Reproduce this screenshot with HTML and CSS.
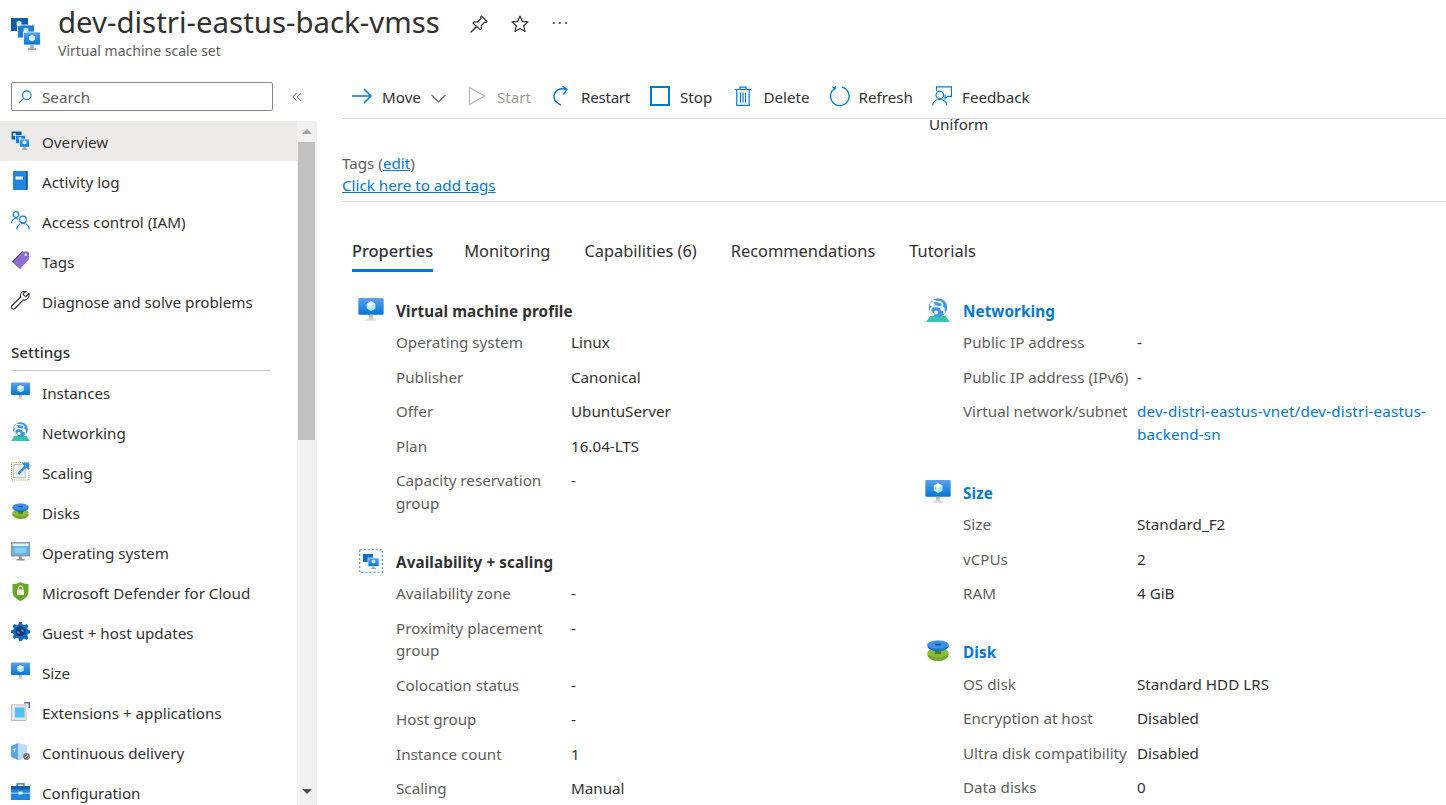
FILE: index.html
```html
<!DOCTYPE html>
<html lang="en">
<head>
<meta charset="utf-8">
<title>dev-distri-eastus-back-vmss</title>
<link rel="stylesheet" href="styles.css">
</head>
<body>
<svg class="defs" xmlns="http://www.w3.org/2000/svg">
	<defs>
		<linearGradient id="screen" x1="0" y1="0" x2="0" y2="1"><stop offset="0" stop-color="#5ea0ef"/><stop offset="1" stop-color="#0078d4"/></linearGradient>
		<linearGradient id="stand" x1="0" y1="0" x2="0" y2="1"><stop offset="0" stop-color="#b3b3b3"/><stop offset="1" stop-color="#e0e0e0"/></linearGradient>
		<symbol id="i-vm" viewBox="0 0 19 18">
			<rect x="0" y="0" width="19" height="12.5" rx=".7" fill="url(#screen)"/>
			<path d="M8 12.500h3l.4 3.400h2v1.200H5.600v-1.200h2z" fill="url(#stand)"/>
			<path d="M9.500 2.500l3.200 1.800v3.600L9.500 9.800 6.300 7.900V4.300z" fill="#c3f1ff"/>
			<path d="M9.500 6l3.200-1.700v3.600L9.500 9.800z" fill="#9cebff"/>
			<path d="M9.500 2.500l3.200 1.800L9.500 6 6.300 4.300z" fill="#fff"/>
		</symbol>
		<symbol id="i-vmss" viewBox="0 0 30 34">
			<rect x="0" y="1" width="17" height="13" fill="#0a5ea8"/>
			<rect x="6.500" y="8" width="17" height="13" fill="#1b7fd6"/>
			<rect x="6.500" y="8" width="17" height="13" fill="none" stroke="#fff" stroke-width=".8"/>
			<rect x="12.500" y="15" width="17" height="13" fill="url(#screen)"/>
			<rect x="12.500" y="15" width="17" height="13" fill="none" stroke="#fff" stroke-width=".8"/>
			<path d="M19.500 28h3l.4 3.200h2.300V33h-8.400v-1.800h2.300z" fill="#a8a8a8"/>
			<path d="M8 3.500l2.400 1.300V8L8 9.500 5.600 8V4.800z" fill="#cfeeff"/>
			<path d="M15 10.500l2.400 1.300v3.200L15 16.500 12.600 15v-3.200z" fill="#cfeeff"/>
			<path d="M21 17.500l3 1.700v3.500l-3 1.800-3-1.800v-3.500z" fill="#d8f3ff"/>
		</symbol>
		<symbol id="i-mini-vmss" viewBox="0 0 19 19">
			<rect x="0.500" y="0.500" width="10" height="8" fill="#0a5ea8"/>
			<rect x="4.500" y="4.500" width="10" height="8" fill="#1b7fd6" stroke="#fff" stroke-width=".6"/>
			<rect x="8.500" y="8" width="10" height="8" fill="url(#screen)" stroke="#fff" stroke-width=".6"/>
			<path d="M12.500 16h2l.3 1.600h1.200V19h-5v-1.400h1.200z" fill="#a8a8a8"/>
			<path d="M3.500 2l1.400.8v1.600l-1.400.8-1.400-.8V2.800zM13.500 9.500l1.800 1v2l-1.800 1-1.800-1v-2z" fill="#d8f3ff"/>
			<path d="M9 6l1.400.8v1.400H7.600V6.800z" fill="#cfeeff"/>
		</symbol>
		<symbol id="i-book" viewBox="0 0 19 19">
			<path d="M3 0h12.500a1 1 0 0 1 1 1v17a1 1 0 0 1-1 1H3a1 1 0 0 1-1-1V1a1 1 0 0 1 1-1z" fill="#1f86dc"/>
			<path d="M15 0h.7a1 1 0 0 1 1 1v17a1 1 0 0 1-1 1H15z" fill="#0f5a9e"/>
			<rect x="4.500" y="5.500" width="7.500" height="3" fill="#f2f6fa"/>
		</symbol>
		<symbol id="i-iam" viewBox="0 0 19 19" fill="none" stroke="#1b82d8" stroke-width="1.200">
			<circle cx="5" cy="3.500" r="2.800"/>
			<path d="M.6 12.500C.8 9.200 2.700 7.500 5 7.500c.8 0 1.500.2 2.100.5"/>
			<circle cx="12" cy="8.500" r="3.300"/>
			<path d="M5.800 18.500c.2-3.900 2.900-6 6.200-6s6 2.100 6.200 6"/>
		</symbol>
		<symbol id="i-tag" viewBox="0 0 18 19">
			<path d="M10.500 .5h6l1 1v6.500l-8.800 10L.4 10.500z" fill="#8f6fd0"/>
			<path d="M.4 10.500L10.500 .5h1.300L2 11l7 7-.3 0z" fill="#6f4bb2"/>
			<circle cx="14.300" cy="3.800" r="1.300" fill="#ece4fa"/>
		</symbol>
		<symbol id="i-wrench" viewBox="0 0 19 19" fill="none" stroke="#323130" stroke-width="1.100" stroke-linejoin="round">
			<path d="M18 2.500l-3 3-2-1-.8-2 3-2C12.600-.2 9.800 1 9.500 4c-.1.800.1 1.400.3 2L1 14.500c-.8.900-.8 2.200 0 3 .9.800 2.100.8 3 0l8.400-8.600c3.300 1 6.400-2.600 5.600-6.400z"/>
		</symbol>
		<symbol id="i-net" viewBox="0 0 19 19">
			<path d="M3.500 14h12l3.500 5H0z" fill="#37c2b1"/>
			<circle cx="9.500" cy="7.500" r="7.300" fill="#3d96e0"/>
			<path d="M4.500 1.800c2 1.200 5.500.4 7.500 1.700 2 1.500 1 3.500-1 3.500S6.500 5.500 4.500 7.500 4 11.500 6.500 13.500M13 9c1.500.5 2 2 1 3.500" fill="none" stroke="#eaf5ff" stroke-width="1.400"/>
			<circle cx="5" cy="5" r="1.800" fill="#fff"/>
			<circle cx="13" cy="8.500" r="1.800" fill="#fff"/>
			<circle cx="8" cy="11.500" r="1.600" fill="#fff"/>
		</symbol>
		<symbol id="i-scale" viewBox="0 0 18 18">
			<rect x=".5" y=".5" width="16.500" height="16.500" fill="none" stroke="#86b83c" stroke-width="1" stroke-dasharray="1 1"/>
			<rect x="2.500" y="2.500" width="11" height="12.500" fill="#f1f1f1" stroke="#bdbdbd"/>
			<path d="M6.800 11.200L14.500 3.500" stroke="#2f8fe0" stroke-width="2.400"/>
			<path d="M10 .8h7.200V8z" fill="#2f8fe0"/>
		</symbol>
		<symbol id="i-disk" viewBox="-1 -1 20 19">
			<ellipse cx="9" cy="11.500" rx="8.500" ry="5" fill="#75a72e"/>
			<ellipse cx="9" cy="10" rx="8.500" ry="3.500" fill="#86bc37"/>
			<rect x="6.500" y="5" width="5" height="6" fill="#4a7f1a"/>
			<ellipse cx="9" cy="4.500" rx="8.500" ry="4.200" fill="#1a6fc9"/>
			<ellipse cx="9" cy="3.500" rx="8.500" ry="3.300" fill="#3c92e6"/>
			<rect x="6.500" y="2.800" width="5" height="1.200" fill="#0f4c8c"/>
		</symbol>
		<symbol id="i-os" viewBox="0 0 19 19">
			<rect x="0" y="0" width="19" height="14.500" rx=".6" fill="#949494"/>
			<rect x="1.500" y="1.500" width="16" height="11.500" fill="#5fb8ee"/>
			<rect x="1.500" y="1.500" width="16" height="2.500" fill="#e4f3fc"/>
			<rect x="4" y="6" width="11" height="5" fill="#8acdf4"/>
			<path d="M8 14.500h3l.3 2.500h2.200v1.600h-8V17h2.200z" fill="#8f8f8f"/>
		</symbol>
		<symbol id="i-shield" viewBox="0 0 16 19">
			<path d="M8 0c2 1.500 5 2 8 2v7.500c0 4.500-3.500 7.500-8 9.500-4.500-2-8-5-8-9.500V2c3 0 6-.5 8-2z" fill="#68a62a"/>
			<rect x="4.500" y="7.500" width="7" height="5.500" rx=".5" fill="#f2f7e8"/>
			<path d="M6 7.500V6a2 2 0 0 1 4 0v1.500" fill="none" stroke="#f2f7e8" stroke-width="1.200"/>
		</symbol>
		<symbol id="i-gear" viewBox="0 0 19 19">
			<path d="M8 0h3l.5 2.500 1.700.7L15.400 2l2 2-1.200 2.200.7 1.700L19 8.500v2.800l-2.100.7-.7 1.700 1.200 2.200-2 2-2.200-1.200-1.700.7L11 19H8l-.5-2.600-1.700-.7-2.200 1.200-2-2 1.200-2.200-.7-1.700L0 11.300V8.500l2.100-.6.7-1.700L1.600 4l2-2 2.200 1.200 1.700-.7z" fill="#0f6cbd"/>
			<circle cx="9.500" cy="9.500" r="5" fill="#103a78"/>
			<path d="M7 9v2h2M12 10V8h-2" stroke="#6ea9e6" fill="none"/>
		</symbol>
		<symbol id="i-ext" viewBox="0 0 19 19">
			<path d="M.5 2.800h14.500v15.700H.5z" fill="#e6e6e6" stroke="#bdbdbd"/>
			<rect x="4" y="5.500" width="9.500" height="10" fill="#50c0f0"/>
			<path d="M13 .8h5.200V6" fill="none" stroke="#6d5ed1" stroke-width="1.600"/>
		</symbol>
		<symbol id="i-box" viewBox="0 0 19 17">
			<path d="M0 3l7-3 2 1v15l-2 1-7-3z" fill="#5aa7e8"/>
			<path d="M7 0l9 2v10l-7 5-2-.2z" fill="#bcdcf5"/>
			<path d="M2.500 6.500l2-.8M3.500 6v3" stroke="#fff" fill="none"/>
			<circle cx="15.500" cy="13.500" r="3.400" fill="#7a7a7a"/>
			<path d="M14 15l3-3" stroke="#fff"/>
		</symbol>
		<symbol id="i-case" viewBox="0 0 19 17">
			<path d="M6 3V.8h7V3" fill="none" stroke="#1473c6" stroke-width="1.300"/>
			<rect x="0" y="3" width="19" height="14" fill="#1f86dc"/>
			<rect x="0" y="3" width="19" height="3.500" fill="#0f5ea8"/>
			<rect x="0" y="9.500" width="19" height="1.500" fill="#82c1f2"/>
			<rect x="7.500" y="8.500" width="4" height="3" fill="#e4f3fc"/>
		</symbol>
	</defs>
</svg>

<header class="page-head">
	<svg class="head-icon"><use href="#i-vmss"/></svg>
	<div class="head-text">
		<h1>dev-distri-eastus-back-vmss</h1>
		<p>Virtual machine scale set</p>
	</div>
	<div class="head-actions">
		<svg class="head-btn" viewBox="0 0 18 18" fill="none" stroke="#323130" stroke-width="1.200" stroke-linejoin="round"><path d="M11.500 1l5.500 5.500-1.200 1-1-.4-3.500 3.400.2 3.200-1.200 1.200-3.300-3.300L1 17l5.500-5.500L3 8l1.200-1.200 3.200.2L11 3.500l-.5-1.200z"/></svg>
		<svg class="head-btn" viewBox="0 0 18 18" fill="none" stroke="#323130" stroke-width="1.200" stroke-linejoin="round"><path d="M9 1l2.300 5.400 5.700.5-4.300 3.800 1.300 5.800L9 13.500l-5 3 1.300-5.800L1 6.900l5.700-.5z"/></svg>
		<span class="head-more">···</span>
	</div>
</header>

<div class="layout">
	<aside class="side">
		<div class="search-row">
			<div class="search-box">
				<svg class="search-icon" viewBox="0 0 14 14" fill="none" stroke="#0078d4" stroke-width="1.100"><circle cx="8.800" cy="5.200" r="4.300"/><path d="M5.700 8.300L.8 13.200"/></svg>
				<span>Search</span>
			</div>
			<svg class="collapse" viewBox="0 0 10 10" fill="none" stroke="#605e5c" stroke-width=".9"><path d="M4.700 1L.8 5l3.900 4M9.200 1L5.300 5l3.900 4"/></svg>
		</div>
		<div class="side-body">
			<nav class="menu">
				<a class="item active"><svg><use href="#i-mini-vmss"/></svg>Overview</a>
				<a class="item"><svg><use href="#i-book"/></svg>Activity log</a>
				<a class="item"><svg><use href="#i-iam"/></svg>Access control (IAM)</a>
				<a class="item"><svg><use href="#i-tag"/></svg>Tags</a>
				<a class="item"><svg><use href="#i-wrench"/></svg>Diagnose and solve problems</a>
				<h2 class="menu-group">Settings</h2>
				<a class="item"><svg><use href="#i-vm"/></svg>Instances</a>
				<a class="item"><svg><use href="#i-net"/></svg>Networking</a>
				<a class="item"><svg><use href="#i-scale"/></svg>Scaling</a>
				<a class="item"><svg><use href="#i-disk"/></svg>Disks</a>
				<a class="item"><svg><use href="#i-os"/></svg>Operating system</a>
				<a class="item"><svg><use href="#i-shield"/></svg>Microsoft Defender for Cloud</a>
				<a class="item"><svg><use href="#i-gear"/></svg>Guest + host updates</a>
				<a class="item"><svg><use href="#i-vm"/></svg>Size</a>
				<a class="item"><svg><use href="#i-ext"/></svg>Extensions + applications</a>
				<a class="item"><svg><use href="#i-box"/></svg>Continuous delivery</a>
				<a class="item"><svg><use href="#i-case"/></svg>Configuration</a>
			</nav>
			<div class="scrollbar">
				<div class="arrow-up"></div>
				<div class="thumb"></div>
				<div class="arrow-down"></div>
			</div>
		</div>
	</aside>

	<main class="main">
		<div class="toolbar">
			<span class="tool tool-move"><svg viewBox="0 0 20 20" fill="none" stroke="#0078d4" stroke-width="1.500"><path d="M0 10h19M12 3l7 7-7 7"/></svg>Move<svg class="chev" viewBox="0 0 15 9" fill="none" stroke="#605e5c" stroke-width="1.200"><path d="M.5 1l7 7 7-7"/></svg></span>
			<span class="tool tool-start off"><svg viewBox="0 0 20 20" fill="none" stroke="#b5b3b1" stroke-width="1.200"><path d="M2.500 1.500l15 8.500-15 8.500z"/></svg>Start</span>
			<span class="tool tool-restart"><svg viewBox="0 0 20 20" fill="none" stroke="#0078d4" stroke-width="1.400"><path d="M14.500 3.500C8 1 1.500 5 2 11c.3 3.500 3 6.500 7 8M10 0l5 3.500-3.500 5"/></svg>Restart</span>
			<span class="tool tool-stop"><svg viewBox="0 0 20 20" fill="none" stroke="#0078d4" stroke-width="2"><rect x="1" y="1" width="18" height="18"/></svg>Stop</span>
			<span class="tool"><svg viewBox="0 0 20 20" fill="none" stroke="#0078d4" stroke-width="1.200"><path d="M2 3.500h16M7 3.500V1.200h6v2.300M3.800 3.500v15.800h12.400V3.500M7.500 6.500v10M10 6.500v10M12.500 6.500v10"/></svg>Delete</span>
			<span class="tool tool-refresh"><svg viewBox="0 0 20 20" fill="none" stroke="#0078d4" stroke-width="1.300"><path d="M12 1.200A9.300 9.300 0 1 1 4.500 2.600M2.500.8l2.600 2 .3-3" /></svg>Refresh</span>
			<span class="tool"><svg viewBox="0 0 20 20" fill="none" stroke="#0078d4" stroke-width="1.200"><path d="M4.500 5V.8h15v9.500h-3.800l-2.600 2.400v-4"/><circle cx="7.800" cy="9" r="3.800"/><path d="M.7 19.500c.3-3.800 3-6 7.100-6s6.600 2.200 7 6"/></svg>Feedback</span>
		</div>

		<div class="content">
			<div class="uniform">Uniform</div>
			<div class="tags-line">Tags (<a href="#">edit</a>)</div>
			<div class="tags-add"><a href="#">Click here to add tags</a></div>
			<hr class="rule">

			<div class="tabs">
				<span class="tab current">Properties</span>
				<span class="tab">Monitoring</span>
				<span class="tab">Capabilities (6)</span>
				<span class="tab">Recommendations</span>
				<span class="tab">Tutorials</span>
			</div>

			<div class="props">
				<div class="prop-col">
					<section class="group">
						<h3><svg><use href="#i-vm"/></svg>Virtual machine profile</h3>
						<div class="row"><span class="key">Operating system</span><span>Linux</span></div>
						<div class="row"><span class="key">Publisher</span><span>Canonical</span></div>
						<div class="row"><span class="key">Offer</span><span>UbuntuServer</span></div>
						<div class="row"><span class="key">Plan</span><span>16.04-LTS</span></div>
						<div class="row"><span class="key">Capacity reservation group</span><span>-</span></div>
					</section>
					<section class="group">
						<h3><svg viewBox="0 0 26 24"><rect x="1.700" y=".7" width="22.600" height="22.600" fill="none" stroke="#5ea0ef" stroke-width="1.300" stroke-dasharray="2 2"/><rect x="5" y="5" width="10" height="8" fill="#0a6fc8"/><rect x="10" y="9" width="11" height="8.500" fill="url(#screen)" stroke="#fff" stroke-width=".6"/><path d="M14.500 17.500h2l.3 1.500h1.200v1h-5v-1h1.200z" fill="#a8a8a8"/><path d="M15.500 10.500l1.800 1v2l-1.800 1-1.800-1v-2z" fill="#d8f3ff"/></svg>Availability + scaling</h3>
						<div class="row"><span class="key">Availability zone</span><span>-</span></div>
						<div class="row"><span class="key">Proximity placement group</span><span>-</span></div>
						<div class="row"><span class="key">Colocation status</span><span>-</span></div>
						<div class="row"><span class="key">Host group</span><span>-</span></div>
						<div class="row"><span class="key">Instance count</span><span>1</span></div>
						<div class="row"><span class="key">Scaling</span><span>Manual</span></div>
					</section>
				</div>
				<div class="prop-col">
					<section class="group">
						<h3 class="linked"><svg><use href="#i-net"/></svg>Networking</h3>
						<div class="row"><span class="key">Public IP address</span><span>-</span></div>
						<div class="row"><span class="key">Public IP address (IPv6)</span><span>-</span></div>
						<div class="row"><span class="key">Virtual network/subnet</span><a class="val-link" href="#">dev-distri-eastus-vnet/dev-distri-eastus-backend-sn</a></div>
					</section>
					<section class="group">
						<h3 class="linked"><svg><use href="#i-vm"/></svg>Size</h3>
						<div class="row"><span class="key">Size</span><span>Standard_F2</span></div>
						<div class="row"><span class="key">vCPUs</span><span>2</span></div>
						<div class="row"><span class="key">RAM</span><span>4 GiB</span></div>
					</section>
					<section class="group">
						<h3 class="linked"><svg><use href="#i-disk"/></svg>Disk</h3>
						<div class="row"><span class="key">OS disk</span><span>Standard HDD LRS</span></div>
						<div class="row"><span class="key">Encryption at host</span><span>Disabled</span></div>
						<div class="row"><span class="key">Ultra disk compatibility</span><span>Disabled</span></div>
						<div class="row"><span class="key">Data disks</span><span>0</span></div>
					</section>
				</div>
			</div>
		</div>
	</main>
</div>
</body>
</html>
```

FILE: styles.css
```css
*
{
	box-sizing: border-box;
}

html, body
{
	margin: 0;
	height: 805px;
	overflow: hidden;
	background: #fff;
}

body
{
	font: 15.2px/22.5px "Noto Sans", sans-serif;
	color: #323130;
}

a
{
	color: #0078d4;
}

.defs
{
	display: block;
	width: 0;
	height: 0;
}

/* page title */
.page-head
{
	display: flex;
	height: 72px;
}
.head-icon
{
	width: 30px;
	height: 34px;
	margin: 17px 0 0 11px;
}
.head-text
{
	margin-left: 17px;
}
h1
{
	margin: 3px 0 0;
	font-size: 29.4px;
	line-height: 38px;
	font-weight: 400;
	white-space: nowrap;
}
.head-text p
{
	margin: 0;
	font-size: 14px;
	line-height: 20px;
	color: #605e5c;
}
.head-actions
{
	display: flex;
	align-items: center;
	gap: 23px;
	height: 20px;
	margin: 14px 0 0 30px;
}
.head-btn
{
	width: 18px;
	height: 18px;
}
.head-more
{
	font-size: 15px;
	letter-spacing: 2px;
	margin: -4px 0 0 0;
}

.layout
{
	display: flex;
	height: 733px;
}

/* left menu */
.side
{
	width: 317px;
	flex: none;
	display: flex;
	flex-direction: column;
}
.search-row
{
	display: flex;
	align-items: center;
	height: 49px;
	padding: 10px 0 10px 11px;
}
.search-box
{
	display: flex;
	align-items: center;
	width: 262px;
	height: 29px;
	padding-left: 6px;
	border: 1px solid #8a8886;
	border-radius: 2px;
	color: #605e5c;
}
.search-box span
{
	padding-top: 2px;
}
.search-icon
{
	width: 14px;
	height: 14px;
	margin-right: 10px;
}
.collapse
{
	width: 10px;
	height: 10px;
	margin-left: 19px;
}
.side-body
{
	flex: 1;
	display: flex;
	min-height: 0;
}
.menu
{
	width: 297px;
	flex: none;
	overflow: hidden;
}
.item
{
	display: flex;
	align-items: center;
	height: 40px;
	padding: 3px 0 0 11px;
	color: #323130;
	white-space: nowrap;
}
.item svg
{
	width: 19px;
	height: 19px;
	margin: -4px 12px 0 0;
	flex: none;
}
.item.active
{
	background: #edebe9;
}
.menu-group
{
	margin: 10px 26px 1px 11px;
	padding: 10px 0 7px;
	height: 40px;
	font-size: 15.2px;
	line-height: 22.5px;
	font-weight: 500;
	border-bottom: 1px solid #c8c6c4;
}
.scrollbar
{
	width: 20px;
	display: flex;
	flex-direction: column;
	background: #f1f1f1;
	padding-top: 8px;
}
.arrow-up, .arrow-down
{
	width: 0;
	height: 0;
	margin: 0 auto;
	border-left: 5px solid transparent;
	border-right: 5px solid transparent;
}
.arrow-up
{
	border-bottom: 5px solid #a3a3a3;
	margin-bottom: 8px;
}
.arrow-down
{
	border-top: 5px solid #505050;
	margin-top: 349px;
}
.thumb
{
	height: 298px;
	margin: 0 2px 0 1px;
	background: #c1c1c1;
}

/* right side */
.main
{
	flex: 1;
	min-width: 0;
	display: flex;
	flex-direction: column;
	padding-left: 25px;
}
.toolbar
{
	display: flex;
	align-items: center;
	height: 47px;
	padding: 3px 0 0 10px;
	border-bottom: 1px solid #d6d6d6;
}
.tool
{
	display: flex;
	align-items: center;
	margin-right: 20px;
	padding-top: 1px;
	white-space: nowrap;
}
.tool svg
{
	width: 20px;
	height: 20px;
	margin: -2px 10px 0 0;
}
.tool .chev
{
	width: 15px;
	height: 9px;
	margin: 2px 0 0 10px;
}
.tool-move, .tool-start
{
	margin-right: 21px;
}
.tool-restart
{
	margin-right: 20px;
	letter-spacing: -.3px;
}
.tool-restart svg, .tool-refresh svg
{
	margin-right: 9px;
}
.tool-stop
{
	margin-right: 21px;
}
.tool-refresh
{
	margin-right: 19px;
}
.tool.off
{
	color: #a19f9d;
}

.content
{
	flex: 1;
	min-height: 0;
	overflow: hidden;
}
.uniform
{
	margin-top: -6px;
	padding-left: 587px;
}
.tags-line
{
	margin-top: 16px;
	color: #605e5c;
}
.rule
{
	height: 1px;
	margin: 4px 0 0;
	border: 0;
	background: #d6d6d6;
}

.tabs
{
	display: flex;
	gap: 34px;
	margin-top: 37px;
	padding-left: 10px;
}
.tab
{
	height: 33px;
	font-size: 16.4px;
	line-height: 24px;
	white-space: nowrap;
}
.tab.current
{
	margin-right: -3px;
	font-weight: 500;
	border-bottom: 3px solid #0078d4;
}

.props
{
	display: grid;
	grid-template-columns: 567px 1fr;
	padding: 28px 0 0 16px;
}
.group
{
	padding-bottom: 24.5px;
}
h3
{
	display: flex;
	align-items: center;
	height: 22.5px;
	margin: 0 0 9px;
	font-size: 15.2px;
	font-weight: 700;
	letter-spacing: .12px;
}
h3 svg
{
	width: 26px;
	height: 24px;
	margin: -2px 12px 0 0;
	flex: none;
}
h3.linked
{
	color: #0078d4;
}
.row
{
	display: grid;
	grid-template-columns: 175px 1fr;
	margin: 0 0 12px 38px;
}
.prop-col:last-child .row
{
	grid-template-columns: 174px 1fr;
}
.key
{
	padding-right: 8px;
	color: #605e5c;
}
.val-link
{
	text-decoration: none;
	letter-spacing: .17px;
	padding-right: 12px;
}
```
